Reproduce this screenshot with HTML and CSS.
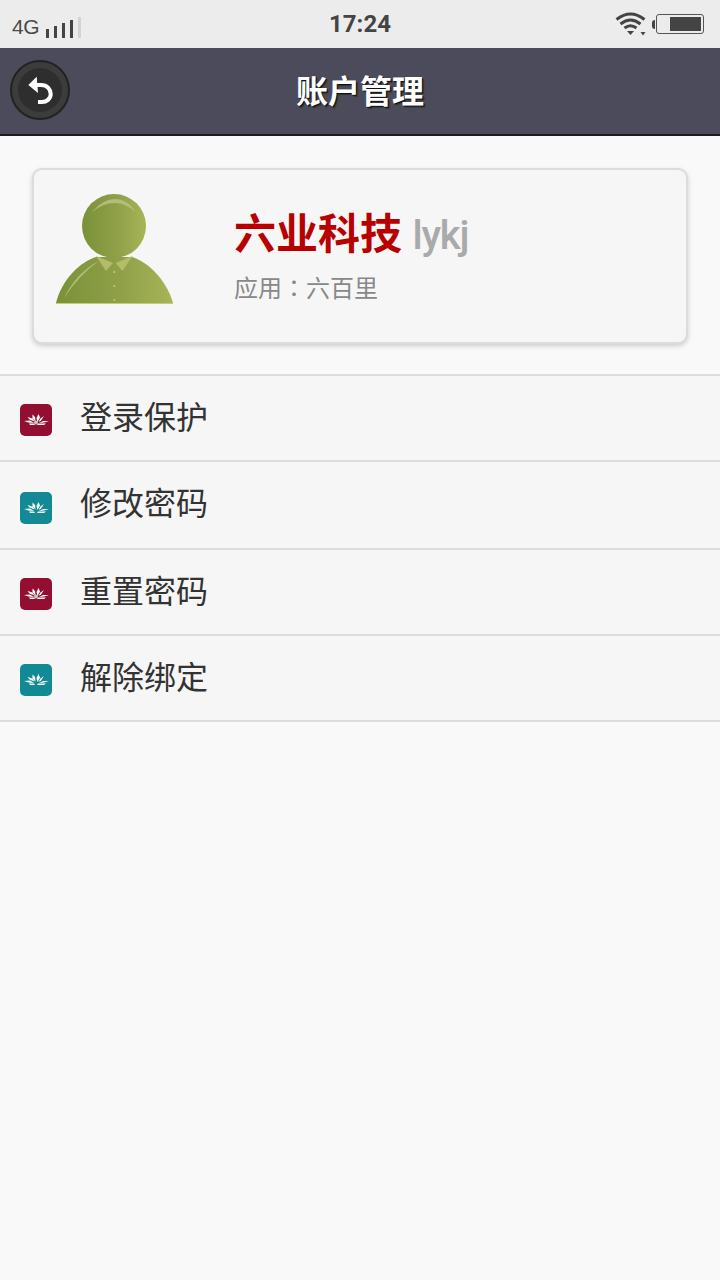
FILE: index.html
```html
<!DOCTYPE html>
<html lang="zh-CN">
<head>
    <meta charset="UTF-8">
    <meta name="viewport" content="width=device-width, initial-scale=1.0">
    <title>账户管理</title>
    <link rel="stylesheet" href="styles.css">
</head>
<body>
    <div class="status-bar">
        <div class="status-left">
            <span class="net">4G</span>
            <div class="signal">
                <i class="s1"></i><i class="s2"></i><i class="s3"></i><i class="s4"></i><i class="s5"></i>
            </div>
        </div>
        <div class="clock">17:24</div>
        <div class="status-right">
            <svg class="wifi" width="32" height="24" viewBox="0 0 32 24">
                <path d="M1.500 7.500 Q15.500 -3.500 29.500 7.500" fill="none" stroke="#444" stroke-width="3"/>
                <path d="M5.500 12 Q15.500 4 25.500 12" fill="none" stroke="#444" stroke-width="3"/>
                <path d="M9.500 16 Q15.500 11.500 21.500 16" fill="none" stroke="#444" stroke-width="3"/>
                <path d="M12 19 H19 L15.500 23 Z" fill="#444"/>
                <path d="M25.500 20 H30.500 L28 23.500 Z" fill="#444"/>
            </svg>
            <div class="battery-tip"></div>
            <div class="battery"><div class="battery-fill"></div></div>
        </div>
    </div>

    <header class="title-bar">
        <div class="back-btn">
            <div class="back-inner">
                <svg width="28" height="30" viewBox="0 0 28 30">
                    <path d="M9 10 H15 C21.500 10 24.700 14.500 24.700 19 C24.700 24 20.500 27 16 27 H12" fill="none" stroke="#fff" stroke-width="4"/>
                    <path d="M10.700 1.700 L2.300 10 L12 18 Z" fill="#fff"/>
                </svg>
            </div>
        </div>
        <h1>账户管理</h1>
    </header>

    <section class="profile-wrap">
        <div class="profile-card">
            <svg class="avatar" width="118" height="110" viewBox="0 0 118 110">
                <defs>
                    <linearGradient id="green" x1="0" y1="0" x2="1" y2="0">
                        <stop offset="0" stop-color="#7a9138"/>
                        <stop offset="0.55" stop-color="#8fa049"/>
                        <stop offset="1" stop-color="#a8b557"/>
                    </linearGradient>
                </defs>
                <path d="M1 109 C7 85 25 68 41 63 H77 C93 68 111 85 118 109 Z" fill="url(#green)"/>
                <path d="M41 62 L58 69 L51 77 Z" fill="#b3bc68"/>
                <path d="M77.500 62 L60.500 69 L67.500 77 Z" fill="#b3bc68"/>
                <circle cx="59" cy="32" r="32" fill="url(#green)"/>
                <path d="M37 18 Q48 5 60 5 Q73 5 81 18 Q70 9 60 9 Q48 9 37 18 Z" fill="#b1bd7c"/>
                <path d="M9 104 Q22 78 44 67 Q25 80 9 104 Z" fill="#b1bd7c"/>
                <circle cx="59.300" cy="78" r="1" fill="#c4cc80"/>
                <circle cx="59.300" cy="92" r="1" fill="#c4cc80"/>
                <circle cx="59.300" cy="106" r="1" fill="#c4cc80"/>
                <rect x="1" y="109" width="117" height="1" fill="#c3cc7c"/>
            </svg>
            <div class="profile-info">
                <div class="profile-name"><span class="company">六业科技</span> <span class="account">lykj</span></div>
                <div class="profile-app">应用<span lang="zh-TW">：</span>六百里</div>
            </div>
        </div>
    </section>

    <ul class="menu">
        <li class="menu-item">
            <span class="lotus red">
                <svg width="32" height="32" viewBox="0 0 32 32"><use href="#lotus-shape"/><circle cx="16" cy="18.500" r="2" fill="#c9c9c9"/></svg>
            </span>
            登录保护
        </li>
        <li class="menu-item">
            <span class="lotus teal">
                <svg width="32" height="32" viewBox="0 0 32 32"><use href="#lotus-shape"/></svg>
            </span>
            修改密码
        </li>
        <li class="menu-item">
            <span class="lotus red">
                <svg width="32" height="32" viewBox="0 0 32 32"><use href="#lotus-shape"/><circle cx="16" cy="18.500" r="2" fill="#c9c9c9"/></svg>
            </span>
            重置密码
        </li>
        <li class="menu-item">
            <span class="lotus teal">
                <svg width="32" height="32" viewBox="0 0 32 32"><use href="#lotus-shape"/></svg>
            </span>
            解除绑定
        </li>
    </ul>

    <svg class="defs-only" width="0" height="0">
        <defs>
            <g id="lotus-shape" fill="#fff">
                <path d="M18.500 10 L20 13.500 L17.500 18 L16.500 14 Z"/>
                <path d="M12.500 10.500 L15 13 L15.500 17.500 L12.500 14.500 Z"/>
                <path d="M24 12 L21 16.500 L18.500 18 L20.500 14.500 Z"/>
                <path d="M7.500 13 L12.500 14.500 L14.500 17.500 L9.500 15.500 Z"/>
                <path d="M4 17 L10 16.500 L14 19 L8.500 18.500 Z"/>
                <path d="M29 17 L23 17 L19 19 L24 18.500 Z"/>
                <path d="M9 19.500 H14 L15 21 H10 Z"/>
                <path d="M18 19.500 H26 L24 21 H17 Z"/>
            </g>
        </defs>
    </svg>
</body>
</html>
```

FILE: styles.css
```css
* {
    box-sizing: border-box;
}
html, body {
    height: 100%;
}
body {
    margin: 0;
    background-color: #f9f9f9;
    font-family: 'Roboto', 'Noto Sans CJK SC', sans-serif;
    color: #333;
}

/* status bar */
.status-bar {
    height: 48px;
    background-color: #ececec;
    display: flex;
    justify-content: space-between;
    align-items: center;
    padding: 0 16px 0 12px;
    position: relative;
}
.status-left {
    display: flex;
    align-items: flex-end;
    height: 24px;
    margin-top: 3px;
}
.net {
    font-family: 'Liberation Sans', sans-serif;
    font-size: 21px;
    line-height: 22px;
    letter-spacing: -0.5px;
    color: #4a4a4a;
    margin-right: 7px;
}
.signal {
    display: flex;
    align-items: flex-end;
    gap: 5px;
    height: 22px;
}
.signal i {
    display: block;
    width: 3px;
    background-color: #444;
}
.s1 { height: 9px; }
.s2 { height: 12px; }
.s3 { height: 15px; }
.s4 { height: 18px; }
.signal .s5 {
    height: 21px;
    background-color: #d4d4d4;
}
.clock {
    position: absolute;
    left: 0;
    right: 0;
    top: 9px;
    text-align: center;
    font-size: 24px;
    line-height: 30px;
    font-weight: 700;
    color: #444;
}
.status-right {
    display: flex;
    align-items: center;
    margin-top: 0;
}
.wifi {
    margin-right: 5px;
}
.battery-tip {
    width: 3px;
    height: 9px;
    background-color: #444;
    border-radius: 3px 0 0 3px;
    margin-right: 1px;
}
.battery {
    width: 48px;
    height: 20px;
    border: 1px solid #555;
    border-radius: 3px;
    padding: 2px 2px 2px 13px;
}
.battery-fill {
    height: 100%;
    background-color: #444;
}

/* title */
.title-bar {
    height: 88px;
    background-color: #4c4b5b;
    border-bottom: 2px solid #1c1c1c;
    display: flex;
    align-items: center;
    justify-content: center;
    position: relative;
    padding-bottom: 4px;
}
.title-bar h1 {
    margin: 0;
    font-size: 32px;
    font-weight: 700;
    color: #fff;
    text-shadow: 1px 1px 0 #111, 2px 2px 1px #333;
}
.back-btn {
    position: absolute;
    left: 10px;
    top: 12px;
    width: 60px;
    height: 60px;
    border-radius: 50%;
    background-color: #3c3c3c;
    border: 2px solid #222;
    display: flex;
    align-items: center;
    justify-content: center;
}
.back-inner {
    width: 44px;
    height: 44px;
    border-radius: 50%;
    background-color: #2e2e2e;
    display: flex;
    align-items: center;
    justify-content: center;
}

/* profile */
.profile-wrap {
    padding: 32px 32px;
    height: 238px;
}
.profile-card {
    height: 176px;
    background-color: #f6f6f6;
    border: 2px solid #dcdcdc;
    border-radius: 10px;
    box-shadow: 0 2px 5px rgba(0, 0, 0, 0.18);
    display: flex;
    padding: 24px 0 0 21px;
}
.avatar {
    flex-shrink: 0;
    display: block;
}
.profile-info {
    margin-left: 61px;
}
.profile-name {
    font-size: 42px;
    line-height: 52px;
    font-weight: 700;
    margin-top: 15px;
}
.company {
    color: #b80000;
}
.account {
    color: #aaa;
    font-size: 40px;
    font-weight: 500;
    letter-spacing: -1.2px;
}
.profile-app {
    font-size: 24px;
    line-height: 34px;
    color: #888;
    margin-top: 10px;
}

/* menu */
.menu {
    list-style: none;
    margin: 0;
    padding: 0;
}
.menu-item {
    height: 86px;
    background-color: #f6f6f6;
    border-bottom: 2px solid #dcdcdc;
    display: flex;
    align-items: center;
    padding: 0 0 6px 20px;
    font-size: 32px;
    color: #333;
}
.menu-item:first-child {
    height: 88px;
    border-top: 2px solid #dcdcdc;
}
.menu-item:nth-child(2) {
    height: 88px;
    padding-bottom: 8px;
}
.lotus {
    width: 32px;
    height: 32px;
    border-radius: 5px;
    margin: 10px 28px 0 0;
    display: block;
    flex-shrink: 0;
}
.menu-item:nth-child(2) .lotus {
    margin-top: 14px;
}
.lotus svg {
    display: block;
}
.red {
    background-color: #930f32;
}
.teal {
    background-color: #118a96;
}
.defs-only {
    position: absolute;
}
```
